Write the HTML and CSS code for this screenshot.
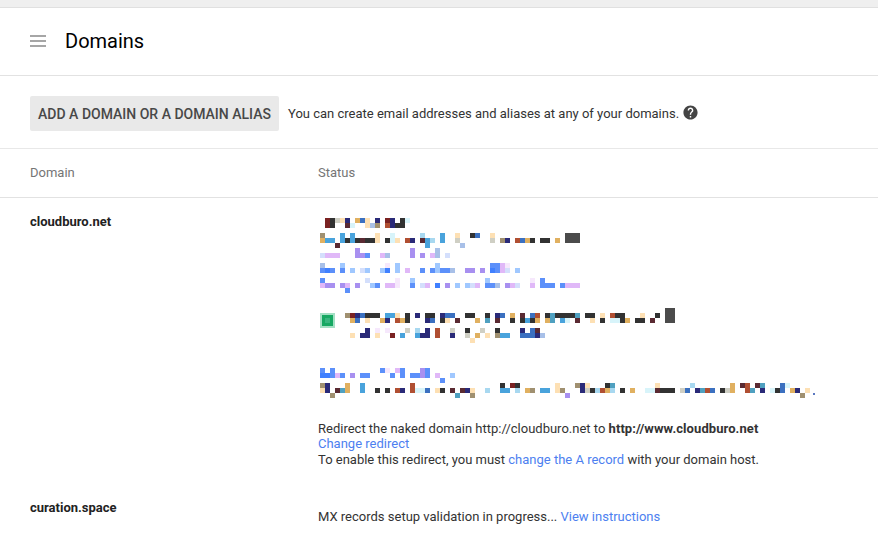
FILE: index.html
```html
<!DOCTYPE html>
<html lang="en">
  <head>
    <meta charset="UTF-8" />
    <title>Domains</title>
    <link rel="stylesheet" href="styles.css">
  </head>
  <body>
    <div class="topband"></div>

    <header class="page-header">
      <svg class="menu-icon" width="16" height="12" viewBox="0 0 16 12">
        <rect y="0" width="16" height="2" />
        <rect y="5" width="16" height="2" />
        <rect y="10" width="16" height="2" />
      </svg>
      <h1>Domains</h1>
    </header>

    <div class="toolbar">
      <button class="add-btn">ADD A DOMAIN OR A DOMAIN ALIAS</button>
      <span>You can create email addresses and aliases at any of your domains.</span>
      <svg class="help-icon" width="17" height="17" viewBox="0 0 24 24">
        <path d="M12 2C6.48 2 2 6.48 2 12s4.48 10 10 10 10-4.48 10-10S17.52 2 12 2zm1 17h-2v-2h2v2zm2.07-7.75l-.9.92C13.45 12.9 13 13.5 13 15h-2v-.5c0-1.1.45-2.1 1.17-2.83l1.24-1.26c.37-.36.59-.86.59-1.41 0-1.1-.9-2-2-2s-2 .9-2 2H8c0-2.21 1.79-4 4-4s4 1.79 4 4c0 .88-.36 1.68-.93 2.25z" />
      </svg>
    </div>

    <div class="table-head">
      <div>Domain</div>
      <div>Status</div>
    </div>

    <div class="domain-row first">
      <div class="domain-name">cloudburo.net</div>
      <div class="domain-status">
        <!-- pixelated part of the screenshot, filled in by mosaic.js -->
        <svg id="mosaic" class="mosaic" width="510" height="195" viewBox="0 0 510 195">
          <defs>
            <filter id="soften" x="-5%" y="-5%" width="110%" height="110%">
              <feGaussianBlur stdDeviation="0.55" />
            </filter>
          </defs>
          <g id="mosaic-cells" filter="url(#soften)">
            <rect x="2" y="105" width="15" height="15" fill="#a4e0c4" />
            <rect x="4" y="107" width="11" height="11" fill="#12a862" />
            <rect x="7" y="110" width="5" height="5" fill="#38b57e" />
            <rect x="495" y="185" width="2" height="2" fill="#5a78c0" />
          </g>
        </svg>
        <p class="redirect">
          Redirect the naked domain http://cloudburo.net to <b>http://www.cloudburo.net</b><br />
          <a href="#">Change redirect</a><br />
          To enable this redirect, you must <a href="#">change the A record</a> with your domain host.
        </p>
      </div>
    </div>

    <div class="domain-row second">
      <div class="domain-name">curation.space</div>
      <div class="domain-status">
        <p class="progress">MX records setup validation in progress... <a href="#">View instructions</a></p>
      </div>
    </div>

    <script src="mosaic.js"></script>
  </body>
</html>
```

FILE: styles.css
```css
body {
  font-family: Roboto, Arial, sans-serif;
  font-size: 13px;
  color: #333;
  background-color: #fff;
  margin: 0;
  padding: 0;
  overflow: hidden;
}
a {
  color: #4d7ff0;
  text-decoration: none;
}
.topband {
  height: 7px;
  background-color: #efefef;
  border-bottom: 1px solid #e0e0e0;
}
.page-header {
  display: flex;
  align-items: center;
  box-sizing: border-box;
  height: 68px;
  padding: 0 0 2px 30px;
  border-bottom: 1px solid #e2e2e2;
}
.menu-icon {
  fill: #a6a6a6;
  margin-right: 19px;
}
h1 {
  font-size: 20px;
  font-weight: 400;
  color: #000;
  margin: 0;
}
.toolbar {
  display: flex;
  align-items: center;
  box-sizing: border-box;
  height: 73px;
  padding: 3px 0 0 30px;
  border-bottom: 1px solid #e8e8e8;
}
.add-btn {
  font-family: inherit;
  font-size: 14px;
  font-weight: 500;
  color: #484848;
  background-color: #e9e9e9;
  border: none;
  border-radius: 2px;
  width: 249px;
  height: 35px;
  padding: 0;
  margin-right: 9px;
}
.help-icon {
  fill: #444;
  margin: -2px 0 0 3px;
}
.table-head {
  display: grid;
  grid-template-columns: 288px 1fr;
  align-items: center;
  box-sizing: border-box;
  height: 49px;
  padding: 0 0 2px 30px;
  color: #757575;
  border-bottom: 1px solid #e2e2e2;
}
.domain-row {
  display: grid;
  grid-template-columns: 288px 1fr;
  padding-left: 30px;
}
.domain-row.first {
  padding-top: 16px;
}
.domain-row.second {
  padding-top: 33px;
}
.domain-name {
  font-weight: 700;
  color: #222;
}
.mosaic {
  display: block;
  margin-top: -6px;
}
.redirect {
  line-height: 15.4px;
  margin: 18px 0 0;
}
.redirect b {
  letter-spacing: 0.08px;
}
.progress {
  margin: 9px 0 0;
}
```

FILE: mosaic.js
```js
var palette = {
  r: "#7a2222", k: "#333333", n: "#2a2a78", b: "#3a6fc0", s: "#4aa3dc",
  l: "#a8d8f0", c: "#d8f4fa", p: "#fde0b4", o: "#e0b060", u: "#b05030",
  g: "#cfcfc4", t: "#50a0c0", m: "#5a2a30", y: "#a09070", d: "#4c4c4c",
  B: "#3f80ff", I: "#5c90fa", A: "#a0c8ff", L: "#a8c0e8", V: "#a890f0",
  P: "#e0b8f8", W: "#f6e8fc", Q: "#d4dffc"
}

// [page y, "startColumn + colours"], one column is 5px wide from x=310
var rows = [
  [218, "3rkgpn 9obp 13n 15rn 18kc"],
  [223, "3rk 7mc 11pLy 15un 17kk"],
  [233, "2y 6s 8s 13p 16c 22l 26s 29p 32kb 36p 51ddd"],
  [238, "2os 4s 6sksk 10mkk 13p 15kc 17p 19un 22msl 26s 29g 36g 38yn 41ubok 46kk 49o 51ddd"],
  [243, "5m 23s 30L"],
  [248, "9V 20V 25L"],
  [253, "2QPPP 9VVI 14PL 20V 22V 24PL 27Q"],
  [263, "2L 6A 15W 17A 25A 36IIPW"],
  [268, "2IBI 6I 8A 10QA 14AB 17A 19P 22I 24IAII 28L 31VV 34V 36BIPQ 41A"],
  [278, "2I 11Q 17W 20A 35A 44W 46I"],
  [283, "2PVV 6VP 9V 12AI 15PPW 20I 22QP 25B 27V 29A 31AQP 35IIL 39VPQ 44P 46III 50IPPP"],
  [288, "7I"],
  [308, "71dd"],
  [313, "7yrnb 11kkk 15ss 17p 19k 21n 23kk 26nbb 31kk 35k 37nb 40o 42m 44bu 47ktkkkkt 55kk 58p 60ukk 66p 69k 71dd"],
  [318, "8ob 11p 14on 17uok 23nb 26kp 29m 33o 35t 37m 40k 42ksko 47ot 50sc 53m 56p 58k 60cck 63o 65kk 68m 71dd"],
  [328, "11n 13W 15W 19g 21l 23n 25u 28g 31k 34g 37k 42n 44bm"],
  [333, "8p 10nn 13p 16r 18s 21snn 25u 28n 31g 33o 35p 37yss 42bbbnL"],
  [338, "32p"],
  [368, "2I 4I 14I 15W 17P 18I 22VI"],
  [373, "2BBI 5PI 8V 10II 16I 18I 20II 22VI 25P 28A"],
  [378, "26I"],
  [383, "2yn 7o 10s 20u 38k 40rk 49p 53ynp 59kt 69p 76l 84o 86mu 89mt 94bc"],
  [388, "2pn 5mto 10s 13k 15k 17un 20ucc 23b 25pk 28m 30mnp 35l 38ss 41l 43oy 46ss 49py 54ngkluol 62k 64o 67cc 69mkkk 74gb 77ntub 82kgo 87ut 90n 92ckb 96on 99p"],
  [393, "4y 29t 32y 51V 98y"]
]

var cells = document.getElementById("mosaic-cells")
// svg starts at page x=318, y=208
rows.forEach(function (row) {
  row[1].split(" ").forEach(function (run) {
    var col = parseInt(run, 10)
    run.replace(/\d+/, "").split("").forEach(function (ch, i) {
      var rect = document.createElementNS("http://www.w3.org/2000/svg", "rect")
      rect.setAttribute("x", (col + i) * 5 - 8)
      rect.setAttribute("y", row[0] - 208)
      rect.setAttribute("width", 5)
      rect.setAttribute("height", 5)
      rect.setAttribute("fill", palette[ch])
      cells.appendChild(rect)
    })
  })
})
```
